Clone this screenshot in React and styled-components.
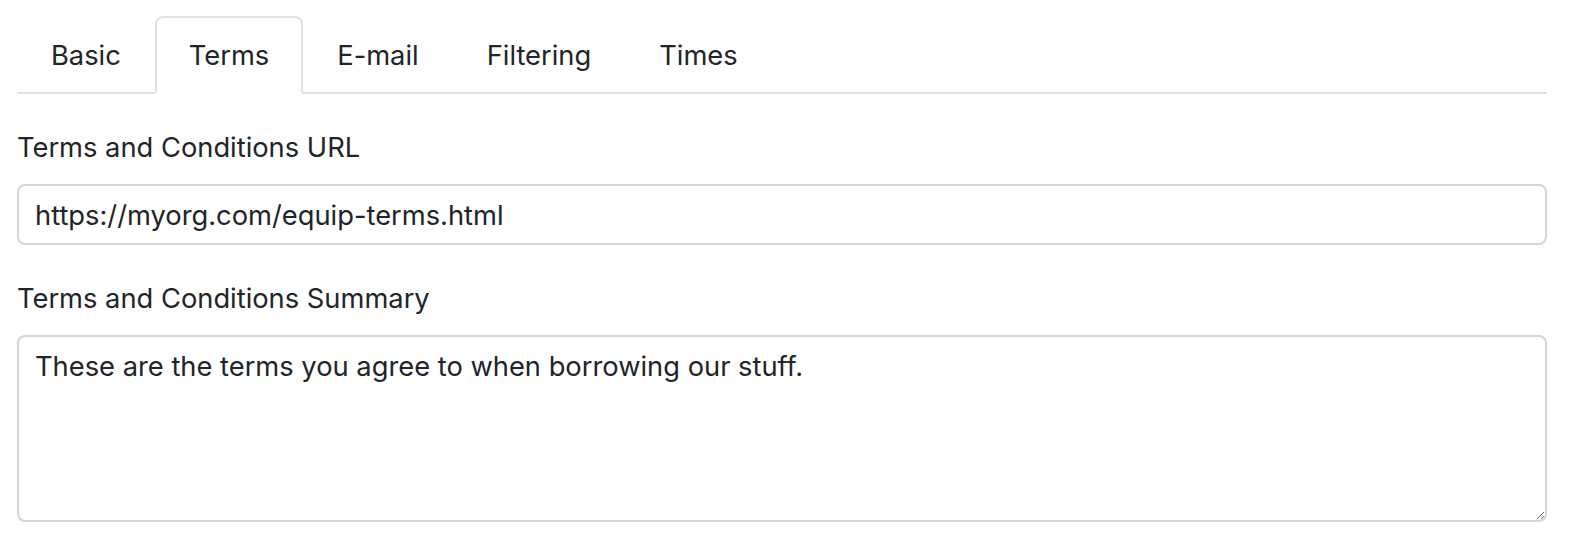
import React from 'react';
import styled, { createGlobalStyle } from 'styled-components';

const GlobalStyle = createGlobalStyle`
    body {
        margin: 0;
        background: #fff;
        color: #212529;
        font-family: Inter, "Noto Sans", "Liberation Sans", sans-serif;
    }
`;

const Page = styled.div`
    padding: 16px 25px 0 17px;
`;

const Tabs = styled.ul`
    display: flex;
    margin: 0 0 32px;
    padding: 0;
    list-style: none;
    border-bottom: 2px solid #dee2e6;
`;

const Tab = styled.li`
    margin-bottom: -2px;
    padding: 17px 32px 15px;
    font-size: 27.3px;
    line-height: 42px;
    color: #212529;
    border: 2px solid ${(p) => (p.$active ? '#dee2e6' : 'transparent')};
    border-bottom-color: ${(p) => (p.$active ? '#fff' : 'transparent')};
    border-radius: 8px 8px 0 0;
    background: ${(p) => (p.$active ? '#fff' : 'transparent')};
`;

const Group = styled.div`
    margin-bottom: 32px;
`;

const Label = styled.label`
    display: block;
    margin-bottom: 15px;
    padding-top: 1px;
    font-size: 27.3px;
    line-height: 42px;
`;

const Input = styled.input`
    display: block;
    box-sizing: border-box;
    width: 100%;
    height: 61px;
    padding: 8px 16px 6px;
    font: inherit;
    font-size: 27.3px;
    line-height: 42px;
    color: #212529;
    border: 2px solid #d2d5d9;
    border-radius: 8px;
    outline: none;
`;

const TextArea = styled.textarea`
    display: block;
    box-sizing: border-box;
    width: 100%;
    height: 187px;
    padding: 9px 16px 8px;
    font: inherit;
    font-size: 27.3px;
    line-height: 42px;
    color: #212529;
    border: 2px solid #d2d5d9;
    border-radius: 8px;
    outline: none;
`;

const tabs = ['Basic', 'Terms', 'E-mail', 'Filtering', 'Times'];

const App = () => {
    return (
        <Page>
            <GlobalStyle />
            <Tabs>
                {tabs.map((t) => (
                    <Tab key={t} $active={t === 'Terms'}>{t}</Tab>
                ))}
            </Tabs>
            <Group>
                <Label>Terms and Conditions URL</Label>
                <Input readOnly value="https://myorg.com/equip-terms.html" />
            </Group>
            <Group>
                <Label>Terms and Conditions Summary</Label>
                <TextArea readOnly value="These are the terms you agree to when borrowing our stuff." />
            </Group>
        </Page>
    );
};

export default App;
